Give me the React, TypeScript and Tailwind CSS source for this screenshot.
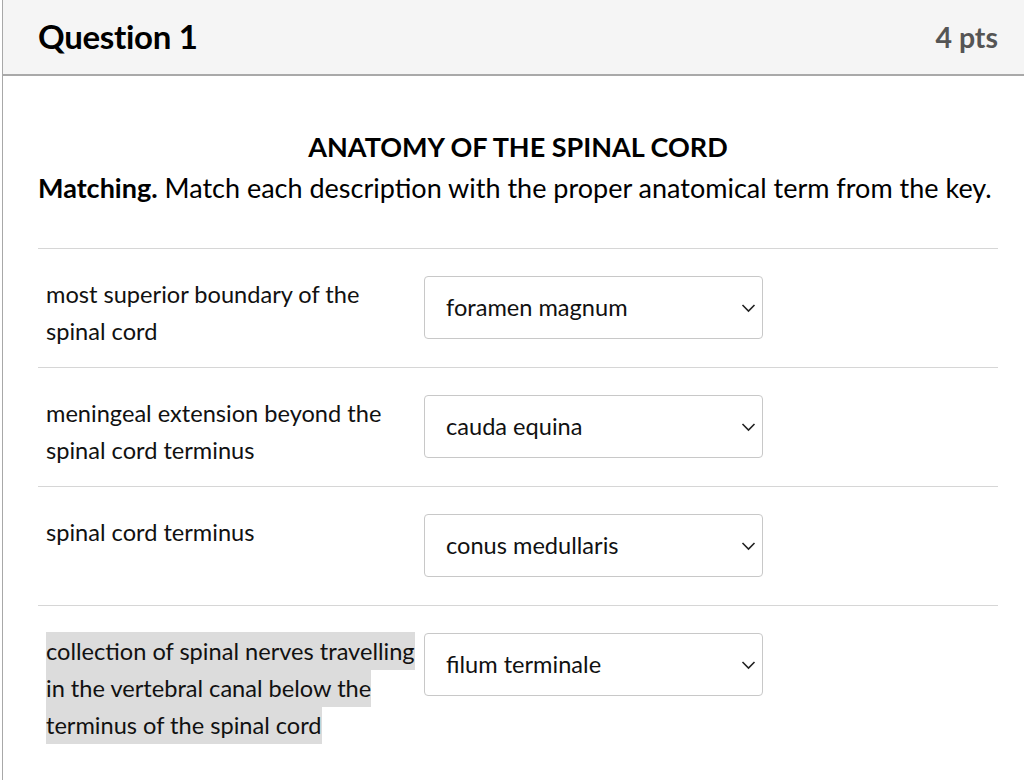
import * as React from "react";

type Row = { text: string; answer: string; highlight?: boolean };

const rows: Row[] = [
  { text: "most superior boundary of the spinal cord", answer: "foramen magnum" },
  { text: "meningeal extension beyond the spinal cord terminus", answer: "cauda equina" },
  { text: "spinal cord terminus", answer: "conus medullaris" },
  {
    text: "collection of spinal nerves travelling in the vertebral canal below the terminus of the spinal cord",
    answer: "filum terminale",
    highlight: true,
  },
];

function Chevron() {
  return (
    <svg width="15" height="10" viewBox="0 0 15 10" fill="none" className="shrink-0">
      <path d="M1.5 2 L7.5 8 L13.5 2" stroke="#222" strokeWidth="1.6" />
    </svg>
  );
}

export default function App() {
  return (
    <div className="w-[1024px] h-[780px] bg-white pl-[2px] font-['Lato',sans-serif] text-[#111] overflow-hidden">
      <div className="h-full border-l-[1.5px] border-[#a8a8a8]">
        {/* Header */}
        <div className="h-[76px] bg-[#f5f5f5] border-b-2 border-[#a9a9a9] flex items-center justify-between pl-[35px] pr-[26px]">
          <span className="text-[33px] font-bold text-black tracking-[-0.3px]">Question 1</span>
          <span className="text-[28.5px] font-bold text-[#555]">4 pts</span>
        </div>

        {/* Body */}
        <div className="pl-[35px] pr-[26px] pt-[52px]">
          <div className="text-center text-[27px] font-bold leading-[38px] text-black">
            ANATOMY OF THE SPINAL CORD
          </div>
          <div className="text-[27px] leading-[44px] text-black whitespace-nowrap">
            <span className="font-bold">Matching.</span> Match each description with the proper anatomical term from the key.
          </div>

          <div className="mt-[38px] border-t border-[#d6d6d6]">
            {rows.map((r, i) => (
              <div
                key={i}
                className={`flex pl-[8px] pt-[27px] ${i < rows.length - 1 ? "h-[119px] border-b border-[#d6d6d6]" : ""}`}
              >
                <div className="w-[378px] text-[23.6px] leading-[37px] pr-[4px]">
                  {r.highlight ? (
                    <span className="bg-[#dcdcdc] py-[5px] box-decoration-clone">{r.text}</span>
                  ) : (
                    r.text
                  )}
                </div>
                <div className="w-[339px] h-[63px] border border-[#c8c8c8] rounded-[4px] flex items-center justify-between pl-[21px] pr-[6px] text-[23.6px]">
                  <span>{r.answer}</span>
                  <Chevron />
                </div>
              </div>
            ))}
          </div>
        </div>
      </div>
    </div>
  );
}
